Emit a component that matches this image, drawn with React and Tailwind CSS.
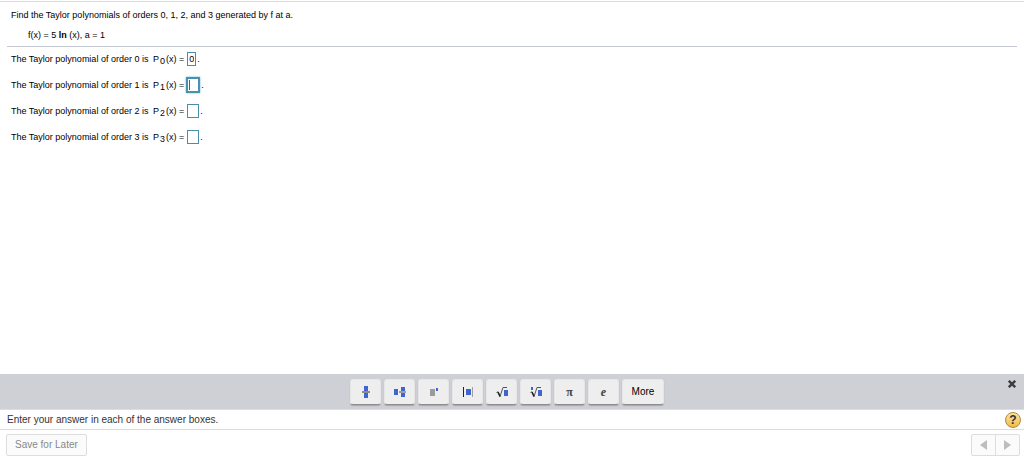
import { useState } from 'react';

const orders = [0, 1, 2, 3];

function FractionIcon() {
  return (
    <svg width="8" height="14" viewBox="0 0 8 14">
      <rect x="2" y="1" width="4" height="5" fill="#3f66cf" />
      <rect x="2" y="8" width="4" height="5" fill="#3f66cf" />
      <rect x="0" y="6" width="8" height="2" fill="#8c8c8c" />
    </svg>
  );
}

function MixedNumberIcon() {
  return (
    <svg width="12" height="12" viewBox="0 0 12 12">
      <rect x="0" y="3" width="4" height="6" fill="#3f66cf" />
      <rect x="7" y="1" width="4" height="4" fill="#3f66cf" />
      <rect x="7" y="7" width="4" height="4" fill="#3f66cf" />
      <rect x="5" y="5" width="7" height="2" fill="#a0a0a0" />
    </svg>
  );
}

function ExponentIcon() {
  return (
    <svg width="10" height="12" viewBox="0 0 10 12">
      <rect x="1" y="3" width="5" height="7" fill="#9b9b9b" />
      <rect x="7" y="2" width="2" height="3" fill="#3f66cf" />
    </svg>
  );
}

function AbsoluteValueIcon() {
  return (
    <svg width="12" height="10" viewBox="0 0 12 10">
      <rect x="1" y="0" width="1" height="10" fill="#222222" />
      <rect x="4" y="2" width="5" height="6" fill="#3f66cf" />
      <rect x="10" y="0" width="1" height="10" fill="#a0a0a0" />
    </svg>
  );
}

function RootIcon({ indexed }) {
  return (
    <svg width="14" height="12" viewBox="0 0 14 12">
      <path d="M1.5 6.5 L3 5.8 L5 10.5 L8 1.5 H12" fill="none" stroke="#555555" strokeWidth="1" />
      <path d="M3 6 L5 10.5" stroke="#222222" strokeWidth="1.5" />
      <rect x="9" y="4" width="4" height="6" fill="#3f66cf" />
      {indexed && <rect x="2" y="1" width="2" height="3" fill="#3f66cf" />}
    </svg>
  );
}

const tools = [
  { name: 'Fraction', icon: <FractionIcon /> },
  { name: 'Mixed number', icon: <MixedNumberIcon /> },
  { name: 'Exponent', icon: <ExponentIcon /> },
  { name: 'Absolute value', icon: <AbsoluteValueIcon /> },
  { name: 'Square root', icon: <RootIcon /> },
  { name: 'Nth root', icon: <RootIcon indexed /> },
  { name: 'Pi', icon: <span className="font-['Liberation_Serif',serif] text-xs font-bold">π</span> },
  { name: 'e', icon: <span className="font-['Liberation_Serif',serif] text-xs font-bold italic">e</span> }
];

const toolButton =
  'flex h-[26px] items-center justify-center rounded-[3px] border border-[#e6e6e6] border-b-[#8f8f93] bg-[#eeeeee] text-[#444444] shadow-[0_1px_1px_#a5a5aa]';

export default function App() {
  const [answers, setAnswers] = useState(['0', '', '', '']);

  const setAnswer = (order, value) => {
    setAnswers(answers.map((a, i) => (i === order ? value : a)));
  };

  return (
    <div className="flex min-h-screen flex-col bg-white pt-px font-['Liberation_Sans',Arial,sans-serif] text-[10px] leading-3 text-black">
      {/* Question */}
      <main className="flex-1 border-t border-[#dddddd] px-[7px] text-[9px] leading-3">
        <div className="border-b border-[#c3c7d1] px-1 pt-[7px] pb-[5px]">
          <p>Find the Taylor polynomials of orders 0, 1, 2, and 3 generated by f at a.</p>
          <p className="mt-2 pl-[17px]">
            f(x) = 5 <b>ln</b> (x), a = 1
          </p>
        </div>

        <div className="flex flex-col gap-0.5 px-1">
          {orders.map((order) => (
            <div key={order} className="flex h-6 items-center">
              <label htmlFor={`order-${order}`} className="whitespace-nowrap">
                The Taylor polynomial of order {order} is <span className="ml-0.5">P</span>
                <sub className="mx-px text-[9px]">{order}</sub>(x) =
              </label>
              <span className="relative flex">
                <input
                  id={`order-${order}`}
                  type="text"
                  autoComplete="off"
                  value={answers[order]}
                  onChange={(e) => setAnswer(order, e.target.value)}
                  className={
                    order === 1
                      ? 'ml-0.5 h-4 w-[14px] border-2 border-[#4a90b0] px-px caret-transparent shadow-[0_0_2px_#6cb0d0] outline-none'
                      : order === 0
                        ? 'ml-[3px] h-[14px] w-[9px] border border-[#4a8cab] px-px outline-none'
                        : 'ml-[3px] h-[14px] w-3 border border-[#4a8cab] px-px outline-none'
                  }
                  autoFocus={order === 1}
                />
                {/* Text cursor of the active box */}
                {order === 1 && answers[1] === '' && (
                  <span className="pointer-events-none absolute top-[3px] left-[5px] h-[10px] w-px bg-[#4455cc]" />
                )}
              </span>
              <span className="ml-px">.</span>
            </div>
          ))}
        </div>
      </main>

      {/* Math palette */}
      <div className="flex h-[35px] items-center bg-[#cfcfd6]">
        <div className="flex flex-1 justify-center gap-[3px] pt-px pl-1.5">
          {tools.map((tool) => (
            <button key={tool.name} type="button" aria-label={tool.name} className={`${toolButton} w-[31px]`}>
              {tool.icon}
            </button>
          ))}
          <button type="button" className={`${toolButton} w-[42px] text-black`}>
            More
          </button>
        </div>
        <button type="button" aria-label="Close" className="mr-2 mb-4">
          <svg width="8" height="8" viewBox="0 0 8 8" stroke="#3c3c3c" strokeWidth="2.4">
            <path d="M0.8 0.8 L7.2 7.2 M7.2 0.8 L0.8 7.2" />
          </svg>
        </button>
      </div>

      {/* Hint and navigation */}
      <div className="flex h-[21px] items-center justify-between border-y border-[#dddde0] pr-[3px] pl-[7px] text-[#333333]">
        <p>Enter your answer in each of the answer boxes.</p>
        <button
          type="button"
          aria-label="Help"
          className="flex size-4 items-center justify-center rounded-full border border-[#b08a3c] bg-linear-to-b from-[#fbe3a0] to-[#f0bd48] text-xs font-bold text-[#333333]"
        >
          ?
        </button>
      </div>
      <footer className="flex h-[30px] items-center justify-between pr-1 pl-1.5">
        <button type="button" className="h-[22px] rounded-[2px] border border-[#dddddd] bg-[#fbfbfb] px-2 text-[#888888]">
          Save for Later
        </button>
        <div className="flex h-[22px] rounded-[2px] border border-[#dddddd] bg-[#fbfbfb]">
          <button type="button" aria-label="Previous" className="flex w-6 items-center justify-center border-r border-[#dddddd]">
            <svg width="7" height="10" viewBox="0 0 7 10" fill="#bdbdc1">
              <path d="M7 0 V10 L0 5 Z" />
            </svg>
          </button>
          <button type="button" aria-label="Next" className="flex w-[23px] items-center justify-center">
            <svg width="7" height="10" viewBox="0 0 7 10" fill="#bdbdc1">
              <path d="M0 0 V10 L7 5 Z" />
            </svg>
          </button>
        </div>
      </footer>
    </div>
  );
}
